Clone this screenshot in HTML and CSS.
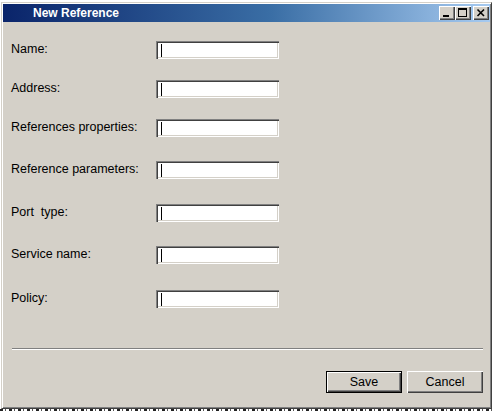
FILE: index.html
```html
<!DOCTYPE html>
<html>
<head>
<meta charset="utf-8">
<title>New Reference</title>
<link rel="stylesheet" href="styles.css">
</head>
<body>
<div class="window">
  <div class="titlebar">
    <span class="title">New Reference</span>
    <div class="caption">
      <span class="cbtn"><svg width="16" height="14" viewBox="0 0 16 14"><rect x="4" y="9" width="6" height="2" fill="#000"/></svg></span>
      <span class="cbtn"><svg width="16" height="14" viewBox="0 0 16 14"><path d="M3 2h9v2H3zM3 4h1v7H3zM11 4h1v7h-1zM4 10h7v1H4z" fill="#000"/></svg></span>
      <span class="cbtn close"><svg width="16" height="14" viewBox="0 0 16 14"><path d="M4.5 3.5L11 10M11 3.5L4.5 10" stroke="#000" stroke-width="1.6" fill="none"/></svg></span>
    </div>
  </div>
  <div class="content">
    <div class="form">
      <div class="row"><span class="label">Name:</span><span class="field"><span class="caret"></span></span></div>
      <div class="row"><span class="label">Address:</span><span class="field"><span class="caret"></span></span></div>
      <div class="row"><span class="label">References properties:</span><span class="field"><span class="caret"></span></span></div>
      <div class="row sp3"><span class="label">Reference parameters:</span><span class="field"><span class="caret"></span></span></div>
      <div class="row sp4"><span class="label">Port&nbsp; type:</span><span class="field"><span class="caret"></span></span></div>
      <div class="row sp3"><span class="label">Service name:</span><span class="field"><span class="caret"></span></span></div>
      <div class="row sp5"><span class="label">Policy:</span><span class="field"><span class="caret"></span></span></div>
    </div>
    <div class="separator"></div>
    <div class="actions">
      <button class="btn default">Save</button>
      <button class="btn">Cancel</button>
    </div>
  </div>
</div>
<div class="behind"></div>
</body>
</html>
```
FILE: styles.css
```css
html, body {
  margin: 0;
  padding: 0;
}
body {
  width: 495px;
  height: 411px;
  overflow: hidden;
  background: #ffffff;
  font-family: "Liberation Sans", Arial, sans-serif;
  font-size: 12.5px;
  color: #000;
}
.window {
  box-sizing: border-box;
  margin: 2px 0 0 1px;
  width: 491px;
  height: 407px;
  background: #d4d0c8;
  border: 1px solid;
  border-color: #d4d0c8 #404040 #404040 #d4d0c8;
  box-shadow: inset 1px 1px #ffffff, inset -1px -1px #808080;
  padding: 1px;
  display: flex;
  flex-direction: column;
}
.titlebar {
  height: 18px;
  background: linear-gradient(to right, #0a246a 0%, #3a6ea5 55%, #a6caf0 100%);
  display: flex;
  align-items: center;
  padding: 0 1px 0 30px;
}
.title {
  color: #fff;
  font-weight: bold;
  font-size: 12px;
  line-height: 18px;
}
.caption {
  margin-left: auto;
  display: flex;
  align-items: center;
}
.cbtn {
  width: 16px;
  height: 14px;
  box-sizing: border-box;
  background: #d4d0c8;
  box-shadow: inset 1px 1px #ffffff, inset -1px -1px #404040, inset -2px -2px #808080;
  display: flex;
}
.cbtn.close {
  margin-left: 2px;
}
.content {
  flex: 1;
  display: flex;
  flex-direction: column;
}
.form {
  display: flex;
  flex-direction: column;
  gap: 21px;
  padding: 19px 0 0 8px;
}
.row {
  display: flex;
  align-items: center;
  height: 18px;
}
.row.sp3 { margin-top: 3px; }
.row.sp4 { margin-top: 4px; }
.row.sp5 { margin-top: 5px; }
.label {
  width: 145px;
  line-height: 14px;
  margin-top: -2px;
}
.field {
  box-sizing: border-box;
  width: 123px;
  height: 18px;
  background: #fff;
  box-shadow: inset 1px 1px #808080, inset 2px 2px #404040, inset -1px -1px #ffffff, inset -2px -2px #d4d0c8;
  display: flex;
  align-items: center;
  padding-left: 5px;
}
.caret {
  width: 1px;
  height: 13px;
  background: #000;
}
.separator {
  margin: 40px 7px 0 9px;
  border-top: 1px solid #808080;
  border-bottom: 1px solid #ffffff;
  height: 0;
}
.actions {
  display: flex;
  justify-content: flex-end;
  gap: 5px;
  margin: 21px 7px 0 0;
}
.btn {
  box-sizing: border-box;
  width: 76px;
  height: 22px;
  margin: 0;
  padding: 0;
  font-family: "Liberation Sans", Arial, sans-serif;
  font-size: 12.5px;
  color: #000;
  background: #d4d0c8;
  border: none;
  box-shadow: inset 1px 1px #ffffff, inset -1px -1px #404040, inset -2px -2px #808080;
}
.btn.default {
  border: 1px solid #000;
}
.behind {
  height: 2px;
  background: repeating-linear-gradient(to right, #222 0 3px, #fff 3px 5px, #555 5px 6px, #fff 6px 9px);
}
```
